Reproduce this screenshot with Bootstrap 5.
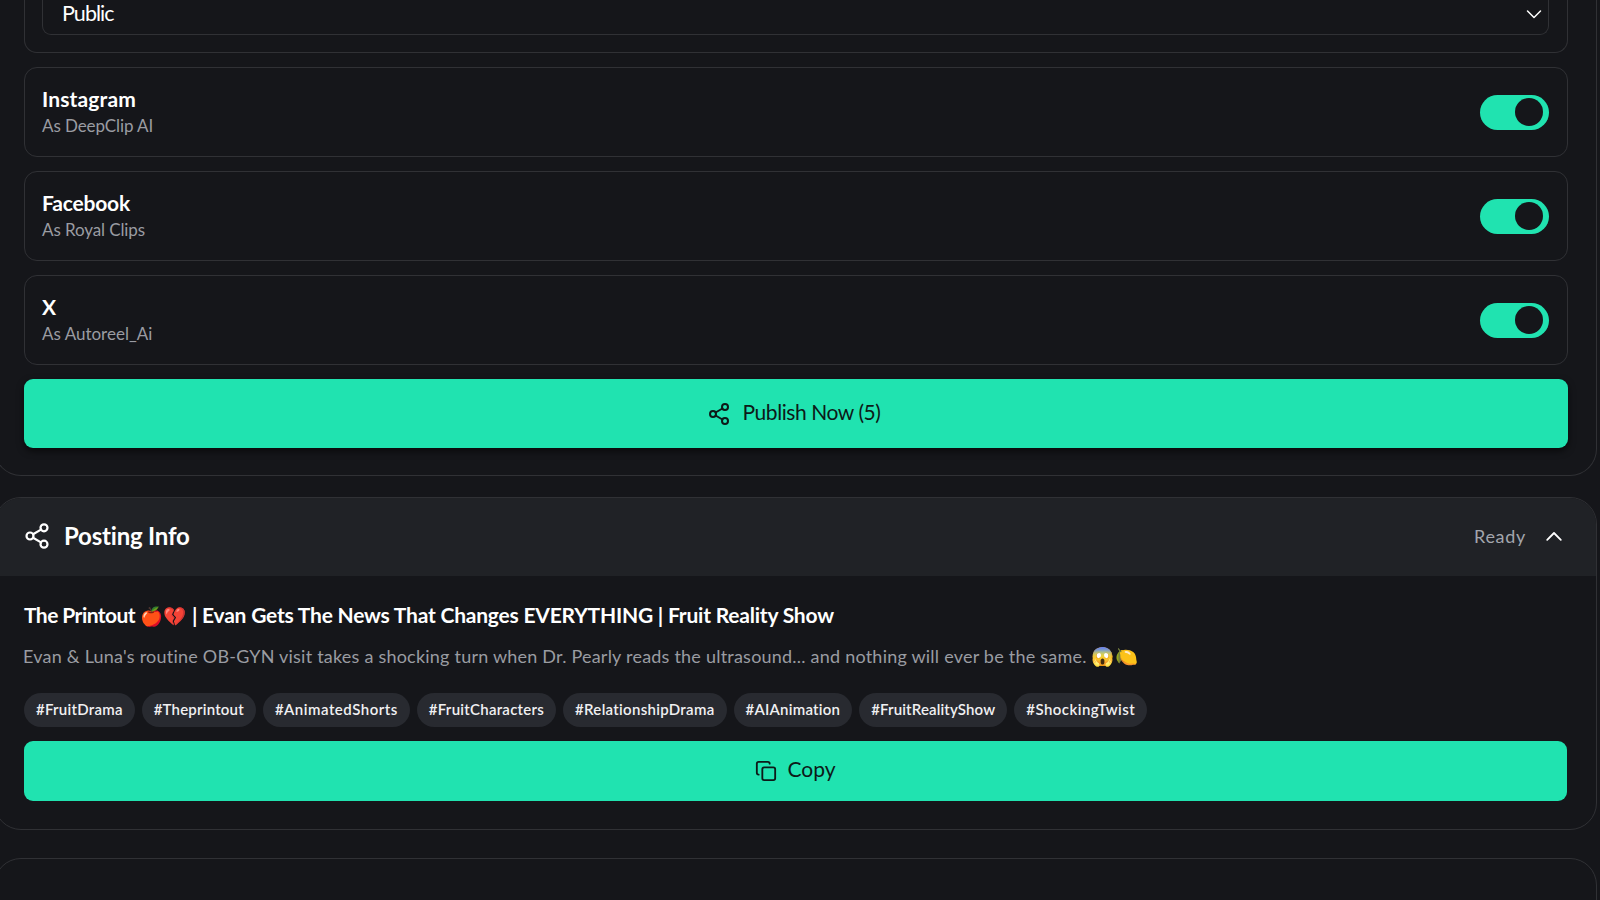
<!DOCTYPE html>
<html lang="en" data-bs-theme="dark">
<head>
<meta charset="utf-8">
<meta name="viewport" content="width=device-width, initial-scale=1">
<title>Posting</title>
<link href="https://cdn.jsdelivr.net/npm/bootstrap@5.3.0/dist/css/bootstrap.min.css" rel="stylesheet">
<style>
body{background:#15161a;font-family:Lato,"Noto Color Emoji",sans-serif;color:#fff;height:900px;overflow:hidden;font-variant-ligatures:none}
.panel{margin-left:-6px;width:1603px;border:1px solid #303135;border-radius:27px;overflow:hidden}
.panel-a{height:476px;border-top:0;border-radius:0 0 27px 27px;padding:0 28px 0 29px}
.panel-b{height:333px;margin-top:21px}
.panel-c{height:80px;margin-top:28px}
.acct{border:1px solid #303135;border-radius:13px;height:90px;padding:0 18px 0 17px;margin-bottom:14px}
.acct-first{height:53px;border-top:0;border-radius:0 0 13px 13px}
.pick{height:35px;border:1px solid #303135;border-top:0;border-radius:0 0 9px 9px;padding:0 5px 0 19px}
.t-pick{font-size:21.5px;line-height:26px;letter-spacing:-.95px}
.t-name{font-size:21px;font-weight:700;line-height:26px}
.t-sub{font-size:17px;line-height:27px;color:#9a9ca2;letter-spacing:-.1px}
.toggle{width:69px;height:35px;border-radius:18px;background:#20e3b0;padding:3px 6px 4px}
.knob{width:28px;height:28px;border-radius:50%;background:#15161a}
.act{background:#20e3b0;border-radius:9px;color:#0d1a18;font-size:21px;line-height:26px}
.act-pub{height:69px;box-shadow:0 3px 7px #0009;letter-spacing:-.43px}
.act-copy{height:60px;margin-top:14px}
.head{height:78px;background:#202226;padding:0 33px 2px 28px}
.t-head{font-size:24px;font-weight:700;line-height:30px;letter-spacing:-.2px}
.t-ready{font-size:18px;line-height:24px;color:#a3a6ad;letter-spacing:.7px}
.post{padding:0 29px}
.t-title{font-size:21px;font-weight:700;line-height:26px;letter-spacing:-.21px;margin-top:26px}
.t-lead{letter-spacing:-.56px}
.emo{font-size:18.5px;letter-spacing:.5px;line-height:20px}
.t-desc{font-size:18px;line-height:24px;color:#9a9ca2;letter-spacing:.22px;margin:16px 0 0 -1px}
.tags{gap:7px;margin-top:25px}
.tag{height:34px;border-radius:17px;background:#282a30;font-size:15px;font-weight:600;padding:0 12px;line-height:32px;color:#f0f0f2}
svg{flex:none;fill:none;stroke:currentColor;stroke-linecap:round;stroke-linejoin:round}
</style>
<script src="https://cdn.jsdelivr.net/npm/bootstrap@5.3.0/dist/js/bootstrap.bundle.min.js"></script>
</head>
<body>
<svg width="0" height="0" class="d-none"><symbol id="share" viewBox="0 0 24 24"><circle cx="18" cy="5" r="3"/><circle cx="6" cy="12" r="3"/><circle cx="18" cy="19" r="3"/><path d="M8.6 13.5l6.8 4M15.4 6.5l-6.8 4"/></symbol></svg>

<section class="panel panel-a">
  <div class="acct acct-first">
    <div class="pick d-flex justify-content-between">
      <span class="t-pick">Public</span>
      <svg class="mt-1" width="18" height="18" viewBox="0 0 18 18" stroke-width="1.5"><path d="M2.5 7l6.5 6.5L15.5 7"/></svg>
    </div>
  </div>
  <div class="acct d-flex align-items-center justify-content-between">
    <div><div class="t-name" style="letter-spacing:.15px">Instagram</div><div class="t-sub">As DeepClip AI</div></div>
    <div class="toggle d-flex justify-content-end"><div class="knob"></div></div>
  </div>
  <div class="acct d-flex align-items-center justify-content-between">
    <div><div class="t-name" style="letter-spacing:-.19px">Facebook</div><div class="t-sub">As Royal Clips</div></div>
    <div class="toggle d-flex justify-content-end"><div class="knob"></div></div>
  </div>
  <div class="acct d-flex align-items-center justify-content-between">
    <div><div class="t-name">X</div><div class="t-sub" style="letter-spacing:0">As Autoreel_Ai</div></div>
    <div class="toggle d-flex justify-content-end"><div class="knob"></div></div>
  </div>
  <div class="act act-pub d-flex align-items-center justify-content-center pe-1">
    <svg width="24" height="24" stroke-width="2" style="margin-right:11px"><use href="#share"/></svg><span class="pb-1">Publish Now (5)</span>
  </div>
</section>

<section class="panel panel-b">
  <div class="head d-flex align-items-center">
    <svg width="28" height="28" stroke-width="1.9" style="margin-right:13px"><use href="#share"/></svg>
    <span class="t-head">Posting Info</span>
    <span class="t-ready ms-auto">Ready</span>
    <svg width="18" height="18" viewBox="0 0 18 18" stroke-width="1.8" style="margin-left:19px"><path d="M2.2 12.8L9 6l6.8 6.8"/></svg>
  </div>
  <div class="post">
    <div class="t-title"><span class="t-lead">The Printout</span> <span class="emo">🍎💔</span> | Evan Gets The News That Changes EVERYTHING | Fruit Reality Show</div>
    <div class="t-desc">Evan &amp; Luna's routine OB-GYN visit takes a shocking turn when Dr. Pearly reads the ultrasound... and nothing will ever be the same. <span class="emo">😱🍋</span></div>
    <div class="tags d-flex">
      <span class="tag" style="letter-spacing:.25px">#FruitDrama</span>
      <span class="tag" style="letter-spacing:.2px">#Theprintout</span>
      <span class="tag" style="letter-spacing:.5px">#AnimatedShorts</span>
      <span class="tag" style="letter-spacing:.25px">#FruitCharacters</span>
      <span class="tag" style="letter-spacing:.3px">#RelationshipDrama</span>
      <span class="tag" style="letter-spacing:.24px">#AIAnimation</span>
      <span class="tag" style="letter-spacing:.14px">#FruitRealityShow</span>
      <span class="tag" style="letter-spacing:.45px">#ShockingTwist</span>
    </div>
    <div class="act act-copy d-flex align-items-center justify-content-center">
      <svg width="22" height="22" viewBox="0 0 24 24" stroke-width="2" style="margin-right:10px"><rect x="8" y="8" width="14" height="14" rx="2"/><path d="M4 16c-1.1 0-2-.9-2-2V4c0-1.1.9-2 2-2h10c1.1 0 2 .9 2 2"/></svg><span class="pb-1">Copy</span>
    </div>
  </div>
</section>

<section class="panel panel-c"></section>
</body>
</html>
